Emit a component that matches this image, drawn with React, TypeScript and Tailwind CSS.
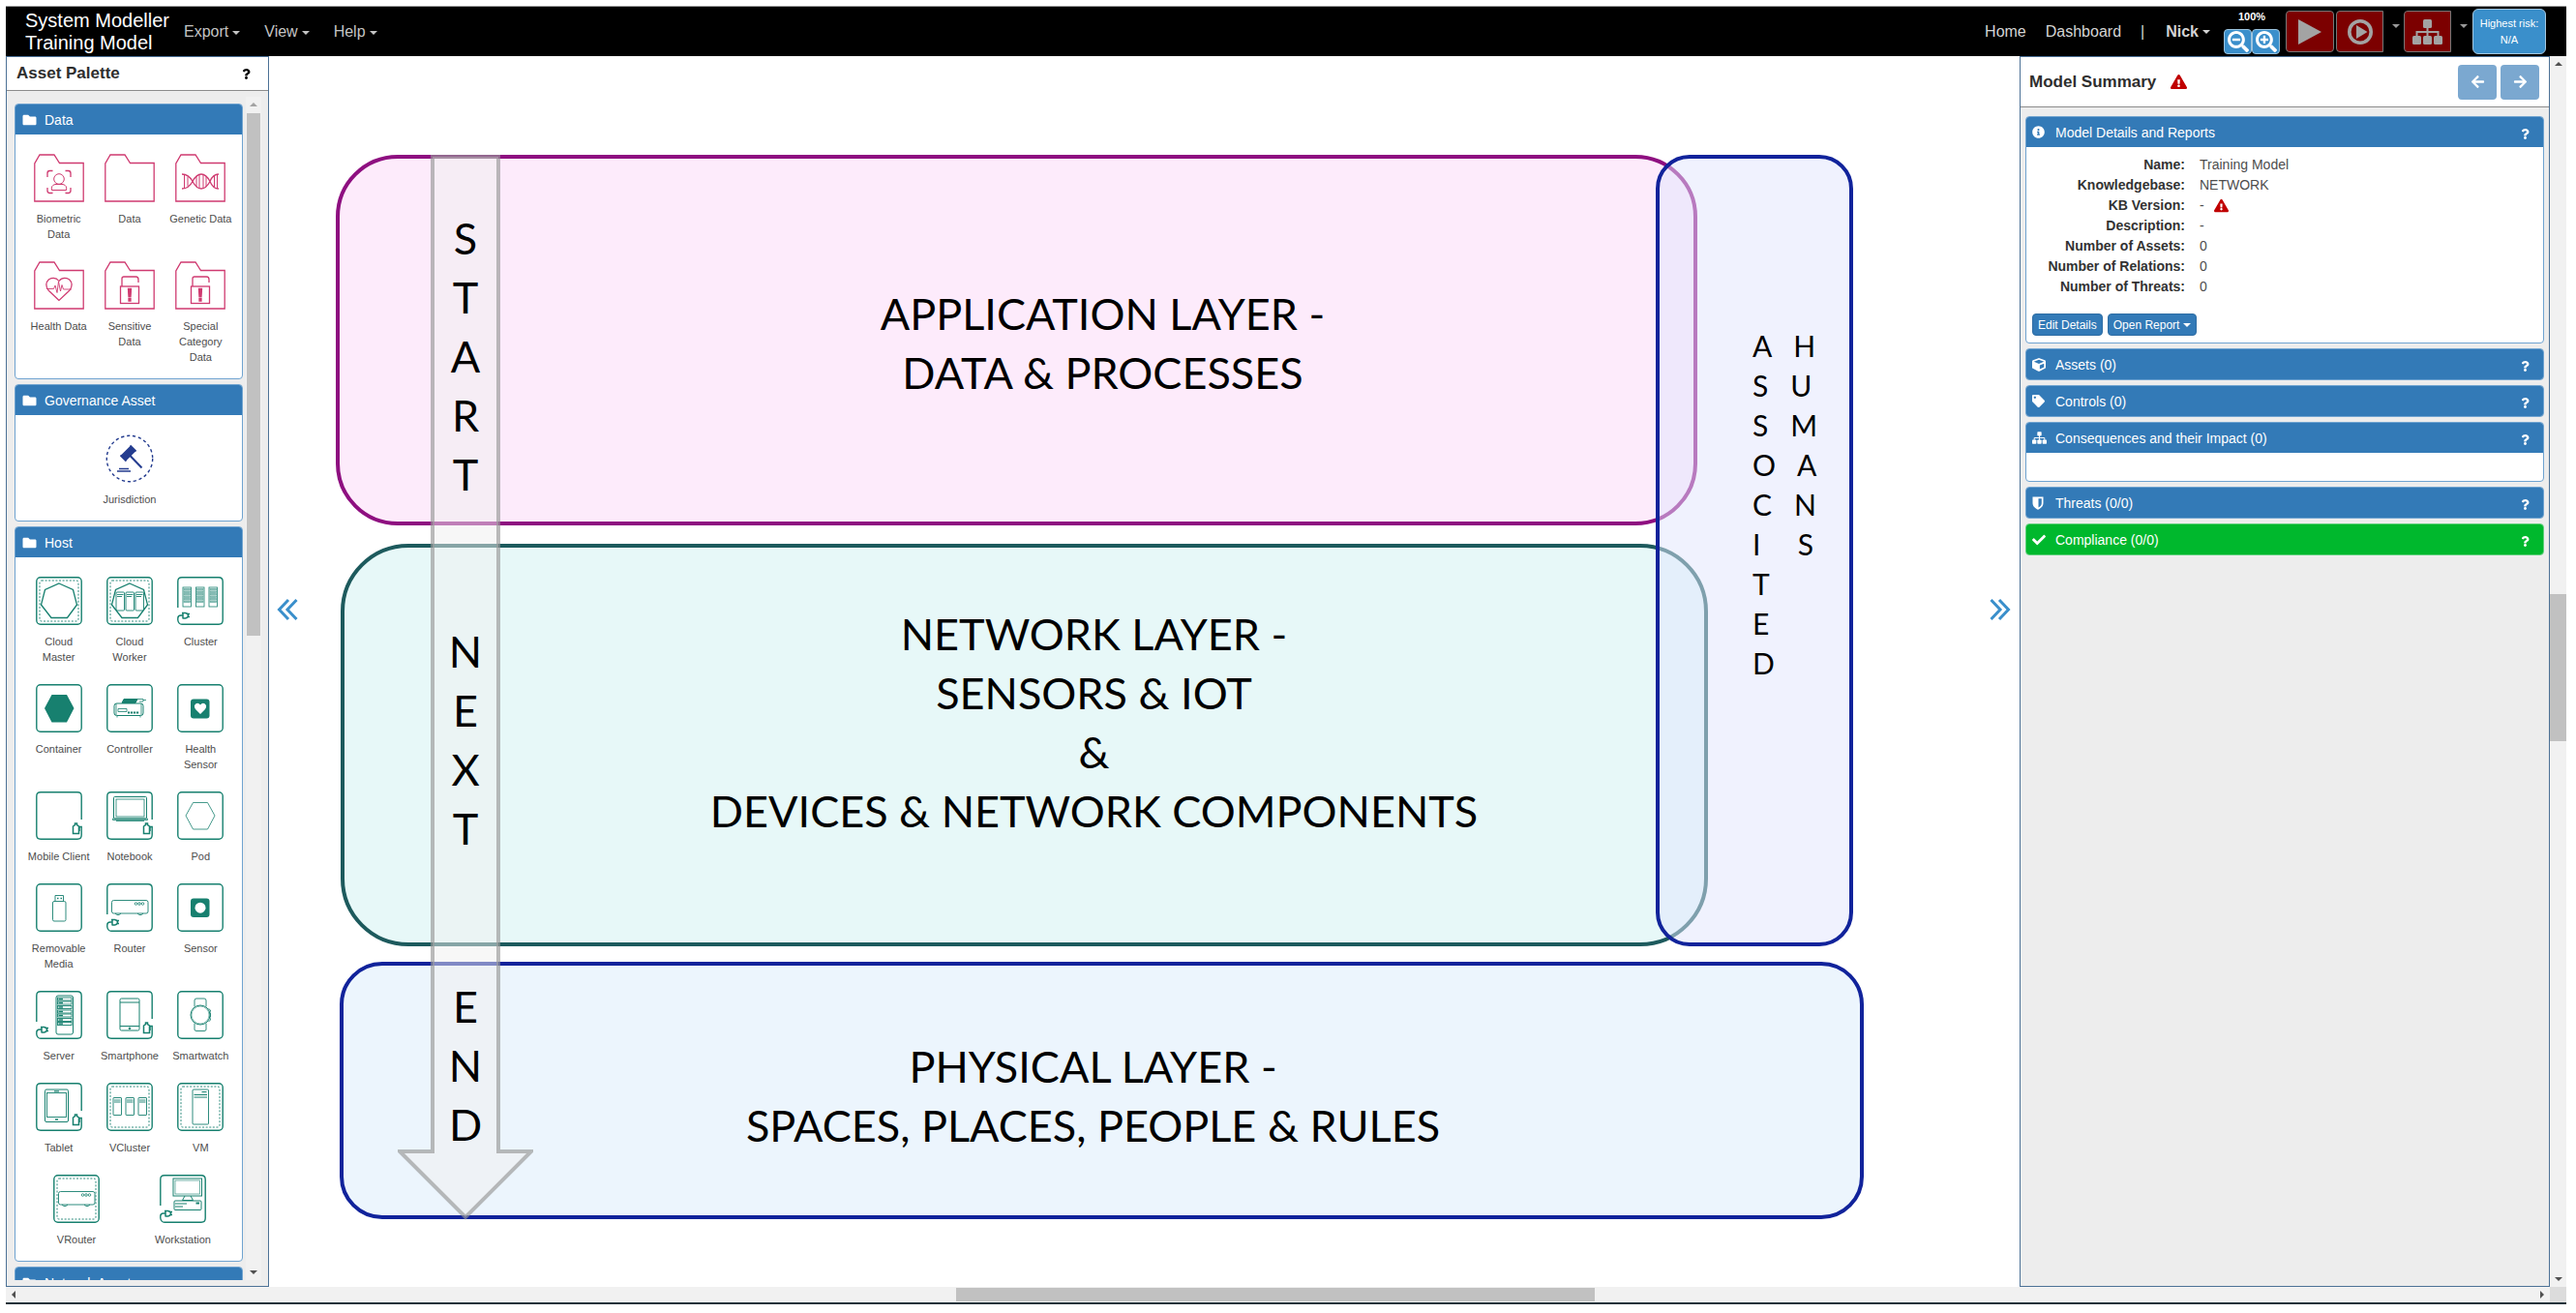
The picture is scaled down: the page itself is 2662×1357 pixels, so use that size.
import React from "react";
import {
  FaSearchMinus,
  FaSearchPlus,
  FaInfoCircle,
  FaCube,
  FaTag,
  FaCheck,
  FaFolder,
  FaExclamationTriangle,
  FaArrowLeft,
  FaArrowRight,
  FaQuestion,
} from "react-icons/fa";

const TEAL = "#17806f";
const PINK = "#cf3a70";

function Caret({ className = "" }: { className?: string }) {
  return (
    <svg viewBox="0 0 8 4" className={"h-1 w-2 shrink-0 " + className} aria-hidden="true">
      <path d="M0 0H8L4 4Z" fill="currentColor" />
    </svg>
  );
}

function SitemapIcon({ className = "" }: { className?: string }) {
  return (
    <svg viewBox="0 0 31 26" className={className} aria-hidden="true" fill="currentColor">
      <rect x="11" y="0" width="9" height="9" rx="1.5" />
      <rect x="0" y="17" width="9" height="9" rx="1.5" />
      <rect x="11" y="17" width="9" height="9" rx="1.5" />
      <rect x="22" y="17" width="9" height="9" rx="1.5" />
      <path d="M15.500 8V18M4.500 18V13H26.500V18" fill="none" stroke="currentColor" strokeWidth="2" />
    </svg>
  );
}

function ShieldIcon() {
  return (
    <svg viewBox="0 0 12 14" className="h-3.5 w-3" aria-hidden="true">
      <path d="M0.500 0.500H11.500V7C11.500 10 9 12.500 6 13.800C3 12.500 0.500 10 0.500 7Z" fill="#fff" />
      <path d="M6.500 2.200H9.800V7C9.800 9 8.300 10.700 6.500 11.600Z" fill="#337ab7" />
    </svg>
  );
}

/* ---------- Asset icons ---------- */

function FolderArt({ children }: { children?: React.ReactNode }) {
  return (
    <svg viewBox="0 0 52 50" className="h-[50px] w-[52px]" fill="none" stroke={PINK} strokeWidth="1.3" aria-hidden="true">
      <path d="M0.800 49V10L6 1H21L26.500 9.500H51.200V49Z" />
      {children}
    </svg>
  );
}

const Lock = () => (
  <>
    <rect x="16.500" y="26" width="19" height="17.500" />
    <path d="M18 26V18Q18 16 20 16H32.500Q35 16 35 19V22" />
    <path d="M24.500 28.500H27.500L27 36.500H25Z M25 38.500H27V41H25Z" fill={PINK} />
  </>
);

type FrameKind = "plain" | "dashed" | "plug" | "battery";

function Frame({ kind = "plain", children }: { kind?: FrameKind; children?: React.ReactNode }) {
  return (
    <svg viewBox="0 0 48 50" className="h-[50px] w-[48px]" fill="none" stroke={TEAL} strokeWidth="1" aria-hidden="true">
      {(kind === "plain" || kind === "dashed") && <rect x="0.800" y="0.800" width="46.400" height="48.400" rx="4" strokeWidth="1.400" />}
      {kind === "dashed" && <rect x="4" y="4" width="40" height="42" rx="2" strokeDasharray="2 1.600" strokeWidth="0.900" />}
      {kind === "plug" && (
        <>
          <path d="M0.800 32V5Q0.800 0.800 5 0.800H43Q47.200 0.800 47.200 5V45Q47.200 49.200 43 49.200H5Q1.500 49.200 0.800 45V43Q0.800 40 4 40H6" strokeWidth="1.400" />
          <path d="M5 37.500H8.500Q11.500 38 11.500 40Q11.500 42.500 8.500 43H5.500M11 38.500H13M11 41.500H13M6 37.500V43" strokeWidth="1.500" />
        </>
      )}
      {kind === "battery" && (
        <>
          <path d="M47.200 29V5Q47.200 0.800 43 0.800H5Q0.800 0.800 0.800 5V45Q0.800 49.200 5 49.200H43Q47.200 49.200 47.200 45V36.500H45V41" strokeWidth="1.400" />
          <path d="M38.500 43.500V36L40.500 34.500V33H42.500V34.500L44.500 36V43.500Z" strokeWidth="1.500" />
        </>
      )}
      {children}
    </svg>
  );
}

const HEPTAGON = "M24 7L38.500 13.500L42.500 29L32.500 42.500H16L5.500 29L9.500 13.500Z";

const RouterBody = ({ y }: { y: number }) => (
  <>
    <rect x="5.500" y={y} width="37.500" height="13.500" rx="2" strokeWidth="0.900" />
    <path d={`M9 ${y + 13.5}L11 ${y + 15}H13L15 ${y + 13.5}M32 ${y + 13.5}L34 ${y + 15}H36L38 ${y + 13.5}`} strokeWidth="0.900" />
    {[30.5, 34, 37.5].map((x) => (
      <circle key={x} cx={x} cy={y + 3.5} r="1.300" strokeWidth="0.800" />
    ))}
  </>
);

const Rack = ({ x }: { x: number }) => (
  <g strokeWidth="0.800">
    <rect x={x} y="11" width="8.500" height="20" />
    {[12.5, 15, 17.5, 20, 22.5, 25].map((y) => (
      <rect key={y} x={x + 1} y={y} width="6.500" height="1.500" fill={TEAL} fillOpacity="0.400" strokeOpacity="0.500" />
    ))}
  </g>
);

const icons: Record<string, React.ReactNode> = {
  biometric: (
    <FolderArt>
      <circle cx="26" cy="26" r="5.300" strokeWidth="1" />
      <path d="M18.500 37.500Q17.500 32.500 22 31.500H30Q34.500 32.500 33.500 37.500Z" strokeWidth="1" />
      <path d="M14 24V20Q14 17.500 16.500 17.500H19.500M32.500 17.500H35.500Q38 17.500 38 20V24M38 35V38Q38 40.500 35.500 40.500H32.500M19.500 40.500H16.500Q14 40.500 14 38V35" />
    </FolderArt>
  ),
  data: <FolderArt />,
  genetic: (
    <FolderArt>
      <path d="M7 21Q14 21 18 28.500Q22 36 27 36Q32 36 36 28.500Q39 21 45 21M7 36Q14 36 18 28.500Q22 21 27 21Q32 21 36 28.500Q39 36 45 36" />
      <path d="M9.500 21.500V35.500M13 23.500V33.500M22 23V34M25 21.500V35.500M29 21.500V35.500M32 23V34M40.500 23V34M43.500 21.500V35.500" strokeWidth="1" />
    </FolderArt>
  ),
  health: (
    <FolderArt>
      <path d="M26 40.500L15 30Q10.500 23.500 15.500 18.800Q22 15.500 26 20.500Q30 15.500 36.500 18.800Q41.500 23.500 37 30Z" strokeWidth="1.200" />
      <path d="M13 28.500H20.500L22 25L24 32.500L25.500 21L27.500 31L29 24.500L30.500 29H39" strokeWidth="0.900" />
    </FolderArt>
  ),
  lock: (
    <FolderArt>
      <Lock />
    </FolderArt>
  ),
  jurisdiction: (
    <svg viewBox="0 0 50 50" className="size-[50px]" fill="none" stroke="#243c8f" aria-hidden="true">
      <circle cx="25" cy="25" r="23.700" strokeWidth="1.400" strokeDasharray="3.200 2.800" />
      <path d="M18.500 24.500L28.500 14.500" strokeWidth="8" />
      <path d="M15.500 21.500L21.500 27.500M25.500 11.500L31.500 17.500" strokeWidth="1.800" />
      <path d="M25 21.500L37.500 34.500" strokeWidth="2" />
      <path d="M14 35.500H24M12 38H26" strokeWidth="1.500" />
    </svg>
  ),
  cloudMaster: (
    <Frame kind="dashed">
      <path d={HEPTAGON} strokeWidth="1.300" fill="#fff" />
    </Frame>
  ),
  cloudWorker: (
    <Frame kind="dashed">
      <path d={HEPTAGON} strokeWidth="1.300" fill="#fff" />
      {[10, 20, 30].map((x) => (
        <g key={x} strokeWidth="0.900">
          <rect x={x} y="16" width="8.500" height="19" rx="1" />
          <path d={`M${x + 1} 18.500H${x + 7.5}M${x + 1} 20.500H${x + 6}`} />
        </g>
      ))}
    </Frame>
  ),
  cluster: (
    <Frame kind="plug">
      <Rack x={6} />
      <Rack x={19.5} />
      <Rack x={33} />
    </Frame>
  ),
  container: (
    <Frame>
      <path d="M16.500 11H32L39.500 25L32 39.500H16.500L9 25Z" fill={TEAL} stroke="none" />
    </Frame>
  ),
  controller: (
    <Frame>
      <rect x="8" y="20" width="30" height="12.500" rx="2.500" />
      <path d="M16 19.500L18 15.500H32L30 19.500Z" fill={TEAL} />
      <path d="M10 20V32M36 20V32M32 15.500H38V18H34M38 16.500H41M12 25.500H21V28.500H12ZM11 33V34.500M35 33V34.500" strokeWidth="0.800" />
      <path d="M22 29.500H34" strokeWidth="2" strokeDasharray="2.200 0.800" />
    </Frame>
  ),
  healthSensor: (
    <Frame>
      <rect x="14" y="15.500" width="19.500" height="20" rx="3" fill={TEAL} stroke="none" />
      <path d="M24 31L19 26Q16.500 22.500 19.500 20.300Q22 19 24 21.500Q26 19 28.500 20.300Q31.500 22.500 29 26Z" fill="#fff" stroke="none" />
    </Frame>
  ),
  mobile: <Frame kind="battery" />,
  notebook: (
    <Frame kind="battery">
      <rect x="7.500" y="5.500" width="34" height="22.500" rx="1" />
      <rect x="10" y="8" width="29" height="18" strokeWidth="0.800" />
      <path d="M6.500 28H42.500V29.500H6.500ZM10 30.500H39" strokeWidth="0.800" />
    </Frame>
  ),
  pod: (
    <Frame>
      <path d="M16.500 11.500H31.500L39 25L31.500 39H16.500L9 25Z" strokeWidth="0.800" />
    </Frame>
  ),
  removable: (
    <Frame>
      <rect x="17.500" y="18.500" width="13.500" height="20.500" rx="1.500" strokeWidth="0.900" />
      <path d="M20 18.500V12.500H28.500V18.500" strokeWidth="0.900" />
      <path d="M22 15.500H23.500M25.500 15.500H27" strokeWidth="1.500" />
    </Frame>
  ),
  router: (
    <Frame kind="plug">
      <RouterBody y={17.5} />
    </Frame>
  ),
  sensor: (
    <Frame>
      <rect x="14" y="15.500" width="19.500" height="19.500" rx="3" fill={TEAL} stroke="none" />
      <circle cx="24" cy="25.200" r="5.500" fill="#fff" stroke="none" />
    </Frame>
  ),
  server: (
    <Frame kind="plug">
      <rect x="21" y="5" width="17.500" height="40" rx="2" />
      {[7, 11, 15.5, 20, 24, 28.5, 32.5].map((y) => (
        <g key={y} strokeWidth="0.900">
          <rect x="22.500" y={y} width="14.500" height="3" />
          <path d={`M23.500 ${y + 1.5}H28`} strokeWidth="1.500" />
        </g>
      ))}
    </Frame>
  ),
  smartphone: (
    <Frame kind="battery">
      <rect x="14" y="8" width="20" height="33" rx="1.500" />
      <path d="M14 12H34M14 36.500H34" />
      <circle cx="24" cy="38.800" r="0.900" fill={TEAL} />
    </Frame>
  ),
  smartwatch: (
    <Frame>
      <circle cx="24" cy="25" r="10" />
      <circle cx="24" cy="25" r="9" strokeWidth="0.500" />
      <path d="M18 16.500V10Q18 8 20 8H28Q30 8 30 10V16.500M18 33.500V40Q18 41.500 20 41.500H28Q30 41.500 30 40V33.500M32.500 18.500L34.500 20L34 22M34.500 22.500V27.500M32.500 32L34.500 30L34 28" strokeWidth="0.900" />
    </Frame>
  ),
  tablet: (
    <Frame kind="battery">
      <rect x="9.500" y="7" width="24" height="33.500" rx="1.500" />
      <rect x="11.500" y="10.500" width="20" height="25" strokeWidth="0.900" />
      <path d="M19 8.800H24M20 38H23" strokeWidth="1.300" />
    </Frame>
  ),
  vcluster: (
    <Frame kind="dashed">
      {[7, 20, 33].map((x) => (
        <g key={x} strokeWidth="0.900">
          <rect x={x} y="15.500" width="8.500" height="18" rx="0.500" />
          <path d={`M${x + 1} 18H${x + 7.5}M${x + 1} 20H${x + 7.5}`} />
        </g>
      ))}
    </Frame>
  ),
  vm: (
    <Frame kind="dashed">
      <rect x="16" y="7" width="16.500" height="36" rx="1" strokeWidth="0.900" />
      <path d="M25.500 9.500H30.500M17.500 12.500H31M17.500 15H31" />
    </Frame>
  ),
  vrouter: (
    <Frame kind="dashed">
      <RouterBody y={17.5} />
    </Frame>
  ),
  workstation: (
    <Frame kind="plug">
      <rect x="14" y="4" width="29.500" height="18" />
      <rect x="16" y="6" width="25.500" height="14" strokeWidth="0.600" />
      <path d="M26 22L23.500 26.500H34.500L32 22" />
      <rect x="15" y="27" width="28" height="9.500" rx="1" />
      <path d="M16 30H28M16 33H24" strokeWidth="1.200" />
      <path d="M37.500 29.500H41" strokeWidth="2" />
    </Frame>
  ),
};

type Asset = [icon: string, label: string];

const palette: { title: string; assets: Asset[] }[] = [
  {
    title: "Data",
    assets: [
      ["biometric", "Biometric Data"],
      ["data", "Data"],
      ["genetic", "Genetic Data"],
      ["health", "Health Data"],
      ["lock", "Sensitive Data"],
      ["lock", "Special Category Data"],
    ],
  },
  { title: "Governance Asset", assets: [["jurisdiction", "Jurisdiction"]] },
  {
    title: "Host",
    assets: [
      ["cloudMaster", "Cloud Master"],
      ["cloudWorker", "Cloud Worker"],
      ["cluster", "Cluster"],
      ["container", "Container"],
      ["controller", "Controller"],
      ["healthSensor", "Health Sensor"],
      ["mobile", "Mobile Client"],
      ["notebook", "Notebook"],
      ["pod", "Pod"],
      ["removable", "Removable Media"],
      ["router", "Router"],
      ["sensor", "Sensor"],
      ["server", "Server"],
      ["smartphone", "Smartphone"],
      ["smartwatch", "Smartwatch"],
      ["tablet", "Tablet"],
      ["vcluster", "VCluster"],
      ["vm", "VM"],
      ["vrouter", "VRouter"],
      ["workstation", "Workstation"],
    ],
  },
  { title: "Network Asset", assets: [] },
];

/* ---------- Header ---------- */

function MenuButton({ label }: { label: string }) {
  return (
    <button type="button" className="flex items-center gap-1 text-[#c4c4c4]">
      {label}
      <Caret className="mt-0.5" />
    </button>
  );
}

function Header() {
  const tool = "flex h-[43px] items-center justify-center border border-[#777] bg-[#7c0000] text-[#a3a3a3]";
  const zoom = "flex h-[26px] w-[29px] items-center justify-center rounded-sm border border-[#9cc3dd] bg-[#3a8fcb] text-white";
  return (
    <header className="flex h-[52px] shrink-0 items-center border-t border-[#999] bg-black pl-5 text-base">
      <h1 className="w-[164px] text-[20px] leading-[23px] whitespace-nowrap text-white">
        System Modeller
        <br />
        Training Model
      </h1>
      <nav className="flex gap-[25px]">
        <MenuButton label="Export" />
        <MenuButton label="View" />
        <MenuButton label="Help" />
      </nav>
      <nav className="ml-auto flex items-center gap-5 text-[#d4d4d4]">
        <a href="#home">Home</a>
        <a href="#dashboard">Dashboard</a>
        <span className="pr-0.5">|</span>
        <button type="button" className="flex items-center gap-1 font-bold">
          Nick
          <Caret />
        </button>
      </nav>
      <div className="ml-3.5 flex h-full flex-col items-center pt-1">
        <span className="text-[11px] leading-[13px] font-bold text-white">100%</span>
        <div className="mt-1.5 flex">
          <button type="button" aria-label="Zoom out" className={zoom}>
            <FaSearchMinus className="size-[22px]" />
          </button>
          <button type="button" aria-label="Zoom in" className={zoom}>
            <FaSearchPlus className="size-[22px]" />
          </button>
        </div>
      </div>
      <button type="button" aria-label="Run" className={tool + " ml-1.5 w-[50px] rounded"}>
        <svg viewBox="0 0 24 26" className="h-[26px] w-6" aria-hidden="true">
          <path d="M0 0L24 13L0 26Z" fill="currentColor" />
        </svg>
      </button>
      <button type="button" aria-label="Run options" className={tool + " ml-0.5 w-[49px] rounded-l"}>
        <svg viewBox="0 0 26 26" className="size-[26px]" aria-hidden="true">
          <circle cx="13" cy="13" r="11.200" fill="none" stroke="currentColor" strokeWidth="3.600" />
          <path d="M9 6L20.500 13L9 20Z" fill="currentColor" />
        </svg>
      </button>
      <button type="button" aria-label="More run options" className="flex h-[38px] w-[21px] items-center justify-center pb-3 pl-1 text-[#999]">
        <Caret />
      </button>
      <button type="button" aria-label="Attack graph" className={tool + " w-[49px] rounded-l"}>
        <SitemapIcon className="h-[26px] w-[31px]" />
      </button>
      <button type="button" aria-label="More graph options" className="flex h-[38px] w-[22px] items-center justify-center pb-3 pl-1 text-[#999]">
        <Caret />
      </button>
      <button type="button" className="mr-[21px] h-[47px] w-[76px] rounded-md border border-[#a5c8e0] bg-[#3a8fcb] text-[11px] leading-[17px] whitespace-nowrap text-white">
        Highest risk:
        <br />
        N/A
      </button>
    </header>
  );
}

/* ---------- Asset palette ---------- */

function PaletteGroup({ title, assets }: { title: string; assets: Asset[] }) {
  return (
    <section className="shrink-0 overflow-hidden rounded border border-[#6fa3d0] bg-white">
      <h3 className="flex h-[31px] items-center gap-2 bg-[#337ab7] pl-[7px] text-sm text-white">
        <FaFolder className="h-3.5 w-[15px]" />
        {title}
      </h3>
      <ul className="flex flex-wrap justify-around pt-[14px] pr-1.5 pl-2">
        {assets.map(([icon, label], i) => (
          <li key={i} className="flex w-1/3 flex-col items-center pt-1.5 pb-3.5">
            {icons[icon]}
            <span className="mt-[9px] max-w-[65px] text-center text-[11px] leading-4 text-[#4d4d4d]">{label}</span>
          </li>
        ))}
      </ul>
    </section>
  );
}

function AssetPalette() {
  return (
    <aside className="flex w-[272px] shrink-0 flex-col border border-[#4c7196] bg-[#ededed] pb-1.5">
      <div className="flex h-[35px] shrink-0 items-center justify-between border-b border-[#8c8c8c] bg-white pr-[17px] pl-2.5">
        <h2 className="text-[17px] font-bold text-[#2e2e2e]">Asset Palette</h2>
        <button type="button" aria-label="Palette help">
          <FaQuestion className="size-[11px] text-black" />
        </button>
      </div>
      <div className="flex min-h-0 flex-1 pl-2">
        <div className="flex w-[236px] flex-col gap-[5px] overflow-hidden pt-[13px]">
          {palette.map((g) => (
            <PaletteGroup key={g.title} {...g} />
          ))}
        </div>
        <div className="mt-1.5 ml-[3px] flex w-4 flex-col items-center bg-[#f1f1f1] pt-1.5" aria-hidden="true">
          <Caret className="rotate-180 text-[#a3a3a3]" />
          <div className="mt-[7px] h-[540px] w-3.5 bg-[#c1c1c1]" />
          <Caret className="mt-auto mb-1.5 text-[#505050]" />
        </div>
      </div>
    </aside>
  );
}

/* ---------- Canvas ---------- */

function Column({ text, className }: { text: string; className: string }) {
  return (
    <p className={"absolute left-[187px] flex w-8 flex-col items-center leading-[61px] " + className}>
      {text.split("").map((c, i) => (
        <span key={i}>{c}</span>
      ))}
    </p>
  );
}

const HUMANS = ["A   H", "S   U", "S   M", "O   A", "C   N", "I     S", "T", "E", "D"];

function Canvas() {
  const layer = "absolute flex flex-col items-center justify-center border-4 text-center whitespace-nowrap";
  return (
    <main className="relative min-w-0 flex-1 overflow-hidden bg-white font-[Lato,sans-serif] text-[45px] leading-[61px] text-black">
      <section className={layer + " top-[102px] left-[69px] h-[383px] w-[1407px] rounded-[64px] border-[#8e0f80] bg-[#fdebfb] pt-1.5 pl-[178px]"}>
        <p>APPLICATION LAYER -</p>
        <p>DATA &amp; PROCESSES</p>
      </section>
      <section className={layer + " top-[504px] left-[74px] h-[416px] w-[1413px] rounded-[70px] border-[#1d5a5d] bg-[#e7f8f8] pb-[46px] pl-[144px]"}>
        <p>NETWORK LAYER -</p>
        <p>SENSORS &amp; IOT</p>
        <p>&amp;</p>
        <p>DEVICES &amp; NETWORK COMPONENTS</p>
      </section>
      <section className={layer + " top-[936px] left-[73px] h-[266px] w-[1575px] rounded-[44px] border-[#11239b] bg-[#ecf5fd] pt-3 pr-[18px]"}>
        <p>PHYSICAL LAYER -</p>
        <p>SPACES, PLACES, PEOPLE &amp; RULES</p>
      </section>
      <section className="absolute top-[102px] left-[1433px] h-[818px] w-[204px] rounded-[35px] border-4 border-[#11239b] bg-[#e1e6fd]/50 bg-clip-padding pt-[173px] pl-[96px] text-[30px] leading-[41px]">
        {HUMANS.map((row, i) => (
          <p key={i} className="whitespace-pre">
            {row}
          </p>
        ))}
      </section>
      <svg viewBox="0 0 140 1102" className="absolute top-[102px] left-[133px] h-[1102px] w-[140px]" aria-hidden="true">
        <path d="M36 2H104V1030H138L70 1098L2 1030H36Z" fill="#f0f0f0" fillOpacity="0.500" stroke="#969696" strokeOpacity="0.650" strokeWidth="4" />
      </svg>
      <Column text="START" className="top-[158px]" />
      <Column text="NEXT" className="top-[585px]" />
      <Column text="END" className="top-[952px]" />
      <button type="button" aria-label="Collapse palette" className="absolute top-[560px] left-2 text-[#3a8fcb]">
        <Chevrons />
      </button>
      <button type="button" aria-label="Collapse summary" className="absolute top-[560px] right-[9px] text-[#3a8fcb]">
        <Chevrons className="rotate-180" />
      </button>
    </main>
  );
}

function Chevrons({ className = "" }: { className?: string }) {
  return (
    <svg viewBox="0 0 22 24" className={"h-6 w-[22px] " + className} fill="none" stroke="currentColor" strokeWidth="3" aria-hidden="true">
      <path d="M12 2L2.500 12L12 22M20.500 2L11 12L20.500 22" />
    </svg>
  );
}

/* ---------- Model summary ---------- */

function Panel({ icon, title, children, green = false }: { icon: React.ReactNode; title: string; children?: React.ReactNode; green?: boolean }) {
  return (
    <section className={"overflow-hidden rounded border bg-white " + (green ? "border-[#5fd07c]" : "border-[#6fa3d0]")}>
      <h3 className={"flex h-[31px] items-center text-sm text-white " + (green ? "bg-[#00b82d]" : "bg-[#337ab7]")}>
        <span className="flex w-[30px] items-center pl-1.5">{icon}</span>
        {title}
        <button type="button" aria-label={title + " help"} className="mt-1 mr-[13px] ml-auto">
          <FaQuestion className="size-[11px]" />
        </button>
      </h3>
      {children}
    </section>
  );
}

const details: [string, React.ReactNode][] = [
  ["Name:", "Training Model"],
  ["Knowledgebase:", "NETWORK"],
  [
    "KB Version:",
    <span key="kb" className="flex items-center gap-2.5">
      - <FaExclamationTriangle className="size-[15px] text-[#c00000]" />
    </span>,
  ],
  ["Description:", "-"],
  ["Number of Assets:", "0"],
  ["Number of Relations:", "0"],
  ["Number of Threats:", "0"],
];

function ModelSummary() {
  const nav = "flex h-9 w-10 items-center justify-center rounded bg-[#7ba8d0] text-white";
  const small = "flex h-[23px] items-center gap-1 rounded-sm border border-[#2e6da4] bg-[#337ab7] px-[5px] text-xs text-white";
  return (
    <aside className="flex w-[548px] shrink-0 flex-col border border-[#4c7196] bg-[#ededed]">
      <div className="flex h-[52px] shrink-0 items-center border-b border-[#8c8c8c] bg-white pr-2.5 pl-[9px]">
        <h2 className="text-[17px] font-bold text-[#2e2e2e]">Model Summary</h2>
        <FaExclamationTriangle className="ml-[15px] size-[17px] text-[#c00000]" />
        <button type="button" aria-label="Back" className={nav + " ml-auto"}>
          <FaArrowLeft className="size-[15px]" />
        </button>
        <button type="button" aria-label="Forward" className={nav + " ml-1"}>
          <FaArrowRight className="size-[15px]" />
        </button>
      </div>
      <div className="flex flex-col gap-[5px] px-[5px] pt-[9px]">
        <Panel icon={<FaInfoCircle className="size-[13px]" />} title="Model Details and Reports">
          <dl className="grid grid-cols-[164px_1fr] gap-x-[15px] pt-2 text-sm leading-[21px] text-[#333]">
            {details.map(([k, v]) => (
              <React.Fragment key={k}>
                <dt className="text-right font-bold whitespace-nowrap">{k}</dt>
                <dd className="text-[#4d4d4d]">{v}</dd>
              </React.Fragment>
            ))}
          </dl>
          <div className="flex gap-[5px] px-1.5 pt-[17px] pb-[7px]">
            <button type="button" className={small}>
              Edit Details
            </button>
            <button type="button" className={small}>
              Open Report <Caret />
            </button>
          </div>
        </Panel>
        <Panel icon={<FaCube className="size-[14px]" />} title="Assets (0)" />
        <Panel icon={<FaTag className="size-[13px] rotate-0" />} title="Controls (0)" />
        <Panel icon={<SitemapIcon className="h-[13px] w-[15px]" />} title="Consequences and their Impact (0)">
          <div className="h-[29px]" />
        </Panel>
        <Panel icon={<ShieldIcon />} title="Threats (0/0)" />
        <Panel icon={<FaCheck className="size-[14px]" />} title="Compliance (0/0)" green />
      </div>
    </aside>
  );
}

export default function App() {
  return (
    <div className="flex h-screen w-full flex-col bg-white pt-1.5 pr-2.5 pb-[9px] pl-1.5 font-['Liberation_Sans',Arial,sans-serif]">
      <Header />
      <div className="flex min-h-0 flex-1">
        <AssetPalette />
        <Canvas />
        <ModelSummary />
        <div className="flex w-[17px] flex-col items-center bg-[#f1f1f1] py-1.5" aria-hidden="true">
          <Caret className="rotate-180 text-[#505050]" />
          <div className="mt-[546px] h-[152px] w-full bg-[#c1c1c1]" />
          <Caret className="mt-auto text-[#505050]" />
        </div>
      </div>
      <div className="flex h-[18px] shrink-0 border-b-2 border-[#22333b] bg-[#f1f1f1]" aria-hidden="true">
        <div className="flex flex-1 items-center px-1">
          <Caret className="rotate-90 text-[#505050]" />
          <div className="ml-[970px] h-3.5 w-[660px] bg-[#c1c1c1]" />
          <Caret className="ml-auto -rotate-90 text-[#505050]" />
        </div>
        <div className="w-[17px] bg-[#dcdcdc]" />
      </div>
    </div>
  );
}
